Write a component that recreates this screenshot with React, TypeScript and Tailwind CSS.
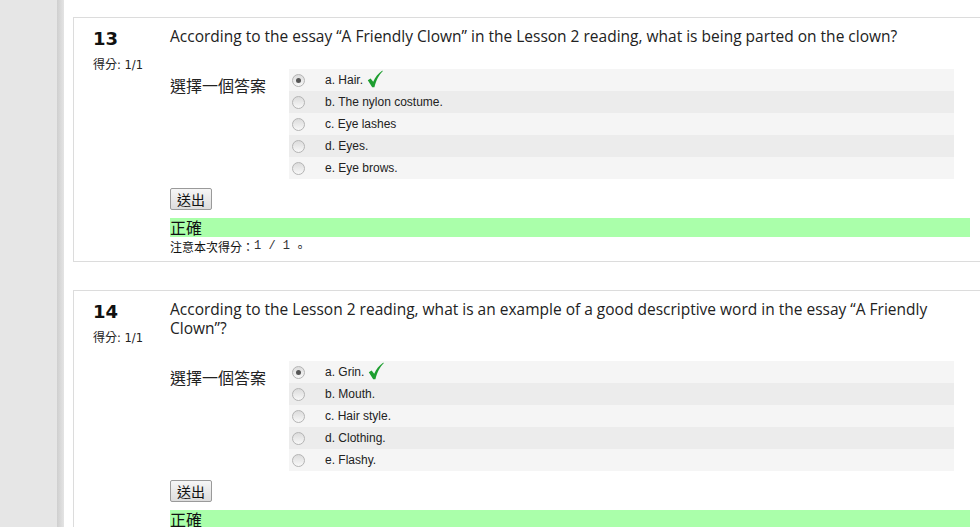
import { Fragment } from 'react';

type Question = {
  num: number;
  text: string;
  answers: string[];
  picked: number;
};

const QUESTIONS: Question[] = [
  {
    num: 13,
    text: 'According to the essay \u201CA Friendly Clown\u201D in the Lesson 2 reading, what is being parted on the clown?',
    answers: ['a. Hair.', 'b. The nylon costume.', 'c. Eye lashes', 'd. Eyes.', 'e. Eye brows.'],
    picked: 0,
  },
  {
    num: 14,
    text: 'According to the Lesson 2 reading, what is an example of a good descriptive word in the essay \u201CA Friendly Clown\u201D?',
    answers: ['a. Grin.', 'b. Mouth.', 'c. Hair style.', 'd. Clothing.', 'e. Flashy.'],
    picked: 0,
  },
];

const sans = "font-['Open_Sans','Noto_Sans_CJK_TC',sans-serif]";
const cjk = "font-['Noto_Sans_CJK_TC','Noto_Sans',sans-serif]";

function Radio({ on }: { on: boolean }) {
  return (
    <span className="w-[13px] h-[13px] rounded-full border border-[#b4b4b4] bg-gradient-to-b from-[#dcdcdc] to-[#f8f8f8] flex items-center justify-center shrink-0">
      {on && <span className="w-[5px] h-[5px] rounded-full bg-[#555]" />}
    </span>
  );
}

function Check() {
  return (
    <svg width="16" height="18" viewBox="0 0 16 18" className="ml-[4px] -mt-[3px]">
      <path d="M0.8 10.2 L3.6 8.4 L6.2 11.8 C8.2 7.4 11 3.6 15.4 0.6 L15.6 1.6 C12 5 9.4 9.6 7.4 17.2 L5.2 17.2 Z" fill="#1d9e2f" />
    </svg>
  );
}

function QuestionCard({ q }: { q: Question }) {
  return (
    <div className="border border-[#dcdcdc] border-r-0 flex pt-[9px] pb-[7px]">
      <div className="w-[96px] shrink-0 pl-[19px]">
        <div className="font-['DejaVu_Sans',sans-serif] font-bold text-[18px] leading-[22px] text-[#111] mt-[1px]">{q.num}</div>
        <div className="text-[12px] leading-[16px] mt-[6px] text-[#222] flex items-baseline">
          <span className={cjk}>得分</span>
          <span className="font-['DejaVu_Sans',sans-serif] text-[11.5px]">: 1/1</span>
        </div>
      </div>
      <div className="flex-1 pr-[10px]">
        <div className={`${sans} text-[15.5px] leading-[19px] text-[#222]`}>{q.text}</div>
        <div className="flex mt-[23px]">
          <div className={`${cjk} w-[119px] shrink-0 text-[16px] leading-[22px] text-[#222] pt-[5px]`}>選擇一個答案</div>
          <div className="w-[665px]">
            {q.answers.map((a, i) => (
              <div
                key={a}
                className={`h-[22px] flex items-center pl-[3px] ${i % 2 === 0 ? 'bg-[#f5f5f5]' : 'bg-[#ececec]'}`}
              >
                <Radio on={i === q.picked} />
                <span className="ml-[20px] font-['Liberation_Sans',Arial,sans-serif] text-[12px] text-[#222] flex items-center">
                  {a}
                  {i === q.picked && <Check />}
                </span>
              </div>
            ))}
          </div>
        </div>
        <button className={`${cjk} mt-[9px] h-[22px] w-[42px] text-[14px] leading-[20px] border border-[#9a9a9a] rounded-[2px] bg-gradient-to-b from-[#f6f6f6] to-[#dddddd] text-[#111]`}>
          送出
        </button>
        <div className={`${cjk} mt-[7px] h-[19px] bg-[#aaffaa] text-[16px] leading-[19px] text-[#111]`}>正確</div>
        <div className="mt-[2px] text-[12px] leading-[15px] text-[#111] flex">
          <span className={cjk}>注意本次得分：</span>
          <span className="font-['Liberation_Mono',monospace] text-[#333]">1 / 1 </span>
          <span className={`${cjk} ml-[4px]`}>。</span>
        </div>
      </div>
    </div>
  );
}

export default function App() {
  return (
    <div className="w-[980px] h-[527px] overflow-hidden flex bg-white">
      <div className="w-[57px] shrink-0 bg-[#e6e6e6]" />
      <div className="w-[7px] shrink-0 bg-gradient-to-r from-[#cfcfcf] to-[#e4e4e4]" />
      <div className="flex-1 pl-[9px] pt-[17px] flex flex-col gap-[28px]">
        {QUESTIONS.map(q => (
          <Fragment key={q.num}>
            <QuestionCard q={q} />
          </Fragment>
        ))}
      </div>
    </div>
  );
}
